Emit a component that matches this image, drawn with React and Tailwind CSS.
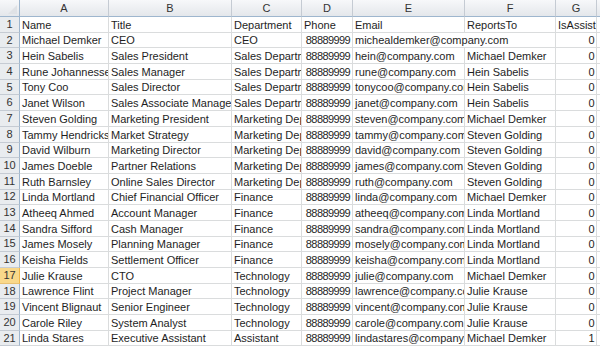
import React from 'react';

const rows = [
  ['Name', 'Title', 'Department', 'Phone', 'Email', 'ReportsTo', 'IsAssistant'],
  ['Michael Demker', 'CEO', 'CEO', 88889999, 'michealdemker@company.com', '', 0],
  ['Hein Sabelis', 'Sales President', 'Sales Department', 88889999, 'hein@company.com', 'Michael Demker', 0],
  ['Rune Johannessen', 'Sales Manager', 'Sales Department', 88889999, 'rune@company.com', 'Hein Sabelis', 0],
  ['Tony Coo', 'Sales Director', 'Sales Department', 88889999, 'tonycoo@company.com', 'Hein Sabelis', 0],
  ['Janet Wilson', 'Sales Associate Manager', 'Sales Department', 88889999, 'janet@company.com', 'Hein Sabelis', 0],
  ['Steven Golding', 'Marketing President', 'Marketing Department', 88889999, 'steven@company.com', 'Michael Demker', 0],
  ['Tammy Hendricks', 'Market Strategy', 'Marketing Department', 88889999, 'tammy@company.com', 'Steven Golding', 0],
  ['David Wilburn', 'Marketing Director', 'Marketing Department', 88889999, 'david@company.com', 'Steven Golding', 0],
  ['James Doeble', 'Partner Relations', 'Marketing Department', 88889999, 'james@company.com', 'Steven Golding', 0],
  ['Ruth Barnsley', 'Online Sales Director', 'Marketing Department', 88889999, 'ruth@company.com', 'Steven Golding', 0],
  ['Linda Mortland', 'Chief Financial Officer', 'Finance', 88889999, 'linda@company.com', 'Michael Demker', 0],
  ['Atheeq Ahmed', 'Account Manager', 'Finance', 88889999, 'atheeq@company.com', 'Linda Mortland', 0],
  ['Sandra Sifford', 'Cash Manager', 'Finance', 88889999, 'sandra@company.com', 'Linda Mortland', 0],
  ['James Mosely', 'Planning Manager', 'Finance', 88889999, 'mosely@company.com', 'Linda Mortland', 0],
  ['Keisha Fields', 'Settlement Officer', 'Finance', 88889999, 'keisha@company.com', 'Linda Mortland', 0],
  ['Julie Krause', 'CTO', 'Technology', 88889999, 'julie@company.com', 'Michael Demker', 0],
  ['Lawrence Flint', 'Project Manager', 'Technology', 88889999, 'lawrence@company.com', 'Julie Krause', 0],
  ['Vincent Blignaut', 'Senior Engineer', 'Technology', 88889999, 'vincent@company.com', 'Julie Krause', 0],
  ['Carole Riley', 'System Analyst', 'Technology', 88889999, 'carole@company.com', 'Julie Krause', 0],
  ['Linda Stares', 'Executive Assistant', 'Assistant', 88889999, 'lindastares@company.com', 'Michael Demker', 1],
];

const letters = ['A', 'B', 'C', 'D', 'E', 'F', 'G', ''];

const Cell = ({ value, span }) => {
  const num = typeof value === 'number';
  return (
    <div
      className={`h-full border-r border-b border-[#dadcdd] flex items-end pb-[1px] overflow-hidden whitespace-nowrap ${
        num ? 'justify-end pr-[2px] tracking-[-0.6px]' : 'pl-[2px]'
      } ${span ? 'col-span-2' : ''}`}
    >
      {value}
    </div>
  );
};

export default function App() {
  return (
    <div
      className="w-[600px] h-[348px] overflow-hidden bg-white text-[11px] text-[#1e1e1e] leading-none"
      style={{ fontFamily: '"Liberation Sans", Arial, sans-serif' }}
    >
      <div className="grid grid-cols-[20px_89px_123px_70px_51px_112px_91px_41px_40px] grid-rows-[17px_repeat(21,15.7px)]">
        {/* corner */}
        <div className="relative border-r border-b border-[#9eb6ce] bg-gradient-to-b from-[#f7f8fa] to-[#e4e7eb]">
          <svg className="absolute right-[2px] bottom-[2px]" width="9" height="9" viewBox="0 0 9 9">
            <polygon points="9,0 9,9 0,9" fill="#dfe2e6" />
          </svg>
        </div>
        {letters.map((l, i) => (
          <div
            key={i}
            className="flex items-center justify-center border-r border-b border-r-[#c5cbd3] border-b-[#9eb6ce] bg-gradient-to-b from-[#f7f8fa] to-[#e4e7eb] text-[#333]"
          >
            {l}
          </div>
        ))}
        {rows.map((r, ri) => (
          <React.Fragment key={ri}>
            <div
              className={`flex items-center justify-center border-r border-b ${
                ri === 16
                  ? 'bg-[#f9d88a] border-r-[#f0b64a] border-b-[#e8c172] text-[#333]'
                  : 'bg-[#e9ecef] border-r-[#9eb6ce] border-b-[#c5cbd3] text-[#333]'
              }`}
            >
              {ri + 1}
            </div>
            {r.map((v, ci) => {
              if (ri === 1 && ci === 5) return null;
              return <Cell key={ci} value={v} span={ri === 1 && ci === 4} />;
            })}
            <div className="border-r border-b border-[#dadcdd]" />
          </React.Fragment>
        ))}
      </div>
    </div>
  );
}
